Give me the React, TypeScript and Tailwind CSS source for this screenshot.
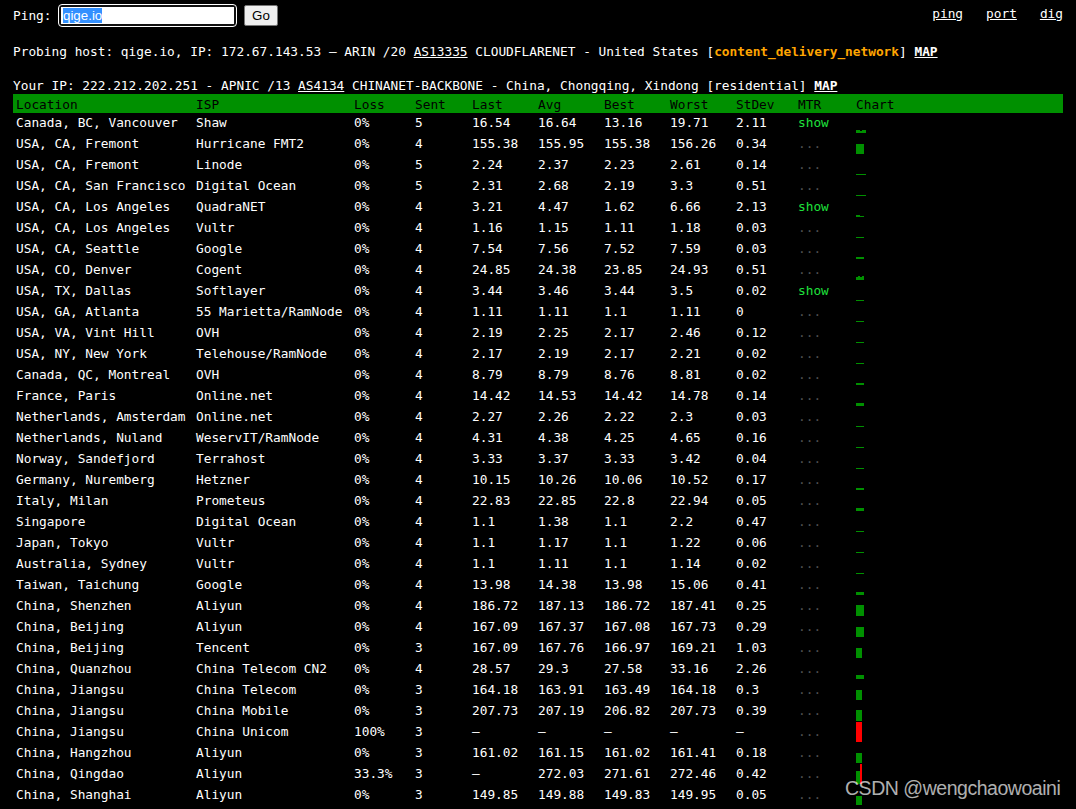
const GREEN = '#009000';
const RED = '#ff0000';

type Row = [string, string, string, number, string, string, string, string, string, boolean, number[]];

// Chart values are bar heights in pixels; -1 marks a lost packet.
const rows: Row[] = [
  ['Canada, BC, Vancouver', 'Shaw', '0%', 5, '16.54', '16.64', '13.16', '19.71', '2.11', true, [3, 3, 2, 3, 3]],
  ['USA, CA, Fremont', 'Hurricane FMT2', '0%', 4, '155.38', '155.95', '155.38', '156.26', '0.34', false, [10, 10, 10, 10]],
  ['USA, CA, Fremont', 'Linode', '0%', 5, '2.24', '2.37', '2.23', '2.61', '0.14', false, [1, 1, 1, 1, 1]],
  ['USA, CA, San Francisco', 'Digital Ocean', '0%', 5, '2.31', '2.68', '2.19', '3.3', '0.51', false, [1, 1, 1, 1, 1]],
  ['USA, CA, Los Angeles', 'QuadraNET', '0%', 4, '3.21', '4.47', '1.62', '6.66', '2.13', true, [2, 2, 1, 1]],
  ['USA, CA, Los Angeles', 'Vultr', '0%', 4, '1.16', '1.15', '1.11', '1.18', '0.03', false, [1, 1, 1, 1]],
  ['USA, CA, Seattle', 'Google', '0%', 4, '7.54', '7.56', '7.52', '7.59', '0.03', false, [2, 2, 2, 2]],
  ['USA, CO, Denver', 'Cogent', '0%', 4, '24.85', '24.38', '23.85', '24.93', '0.51', false, [3, 4, 3, 4]],
  ['USA, TX, Dallas', 'Softlayer', '0%', 4, '3.44', '3.46', '3.44', '3.5', '0.02', true, [1, 1, 1, 1]],
  ['USA, GA, Atlanta', '55 Marietta/RamNode', '0%', 4, '1.11', '1.11', '1.1', '1.11', '0', false, [1, 1, 1, 1]],
  ['USA, VA, Vint Hill', 'OVH', '0%', 4, '2.19', '2.25', '2.17', '2.46', '0.12', false, [1, 1, 1, 1]],
  ['USA, NY, New York', 'Telehouse/RamNode', '0%', 4, '2.17', '2.19', '2.17', '2.21', '0.02', false, [1, 1, 1, 1]],
  ['Canada, QC, Montreal', 'OVH', '0%', 4, '8.79', '8.79', '8.76', '8.81', '0.02', false, [2, 2, 2, 2]],
  ['France, Paris', 'Online.net', '0%', 4, '14.42', '14.53', '14.42', '14.78', '0.14', false, [3, 3, 3, 3]],
  ['Netherlands, Amsterdam', 'Online.net', '0%', 4, '2.27', '2.26', '2.22', '2.3', '0.03', false, [1, 1, 1, 1]],
  ['Netherlands, Nuland', 'WeservIT/RamNode', '0%', 4, '4.31', '4.38', '4.25', '4.65', '0.16', false, [1, 1, 1, 1]],
  ['Norway, Sandefjord', 'Terrahost', '0%', 4, '3.33', '3.37', '3.33', '3.42', '0.04', false, [1, 1, 1, 1]],
  ['Germany, Nuremberg', 'Hetzner', '0%', 4, '10.15', '10.26', '10.06', '10.52', '0.17', false, [2, 2, 2, 2]],
  ['Italy, Milan', 'Prometeus', '0%', 4, '22.83', '22.85', '22.8', '22.94', '0.05', false, [3, 3, 3, 3]],
  ['Singapore', 'Digital Ocean', '0%', 4, '1.1', '1.38', '1.1', '2.2', '0.47', false, [1, 1, 1, 1]],
  ['Japan, Tokyo', 'Vultr', '0%', 4, '1.1', '1.17', '1.1', '1.22', '0.06', false, [1, 1, 1, 1]],
  ['Australia, Sydney', 'Vultr', '0%', 4, '1.1', '1.11', '1.1', '1.14', '0.02', false, [1, 1, 1, 1]],
  ['Taiwan, Taichung', 'Google', '0%', 4, '13.98', '14.38', '13.98', '15.06', '0.41', false, [3, 3, 3, 3]],
  ['China, Shenzhen', 'Aliyun', '0%', 4, '186.72', '187.13', '186.72', '187.41', '0.25', false, [11, 11, 11, 11]],
  ['China, Beijing', 'Aliyun', '0%', 4, '167.09', '167.37', '167.08', '167.73', '0.29', false, [10, 10, 10, 10]],
  ['China, Beijing', 'Tencent', '0%', 3, '167.09', '167.76', '166.97', '169.21', '1.03', false, [10, 10, 10]],
  ['China, Quanzhou', 'China Telecom CN2', '0%', 4, '28.57', '29.3', '27.58', '33.16', '2.26', false, [4, 4, 4, 4]],
  ['China, Jiangsu', 'China Telecom', '0%', 3, '164.18', '163.91', '163.49', '164.18', '0.3', false, [10, 10, 10]],
  ['China, Jiangsu', 'China Mobile', '0%', 3, '207.73', '207.19', '206.82', '207.73', '0.39', false, [11, 11, 11]],
  ['China, Jiangsu', 'China Unicom', '100%', 3, '–', '–', '–', '–', '–', false, [-1, -1, -1]],
  ['China, Hangzhou', 'Aliyun', '0%', 3, '161.02', '161.15', '161.02', '161.41', '0.18', false, [10, 10, 10]],
  ['China, Qingdao', 'Aliyun', '33.3%', 3, '–', '272.03', '271.61', '272.46', '0.42', false, [13, 13, -1]],
  ['China, Shanghai', 'Aliyun', '0%', 3, '149.85', '149.88', '149.83', '149.95', '0.05', false, [9, 9, 9]],
];

const headings = ['Location', 'ISP', 'Loss', 'Sent', 'Last', 'Avg', 'Best', 'Worst', 'StDev', 'MTR', 'Chart'];

const columns = 'grid grid-cols-[180px_158px_61px_57px_66px_66px_66px_66px_62px_58px_1fr]';

function Chart({ values }: { values: number[] }) {
  return (
    <svg width="200" height="20" className="block" shapeRendering="crispEdges">
      {values.map((v, i) => {
        const h = v < 0 ? 20 : v;
        return <rect key={i} x={i * 2} y={20 - h} width="2" height={h} fill={v < 0 ? RED : GREEN} />;
      })}
    </svg>
  );
}

export default function App() {
  return (
    <div className="relative h-[809px] w-full overflow-hidden bg-black pl-[13px] pr-[13px] font-['DejaVu_Sans_Mono',monospace] text-[12.8px] leading-[17px] whitespace-pre text-white">
      <header className="flex h-[43px] justify-between">
        <form className="flex h-[31px] items-center" onSubmit={(e) => e.preventDefault()}>
          <label className="w-[45px]">Ping:</label>
          <div className="h-[23px] w-[179px] rounded-[4px] border-[1.5px] border-white bg-[#101010] p-[2px]">
            <div className="flex h-full items-center bg-white pl-[2px] font-['Liberation_Sans',sans-serif] text-[13.33px] leading-[15px] text-white">
              <span className="bg-[#3390ff]">qige.io</span>
            </div>
          </div>
          <button className="ml-[7px] h-[21px] w-[34px] rounded-[2px] border border-[#767676] bg-[#efefef] font-['Liberation_Sans',sans-serif] text-[13.33px] leading-[15px] text-black">
            Go
          </button>
        </form>
        <nav className="flex gap-[23px] pt-[5px]">
          <a className="underline">ping</a>
          <a className="underline">port</a>
          <a className="underline">dig</a>
        </nav>
      </header>
      <p className="h-[34px]">
        Probing host: qige.io, IP: 172.67.143.53 – ARIN /20 <a className="underline">AS13335</a> CLOUDFLARENET - United States [<b className="text-[#ffa500]">content_delivery_network</b>] <a className="font-bold underline">MAP</a>
      </p>
      <p className="h-[17px]">
        Your IP: 222.212.202.251 - APNIC /13 <a className="underline">AS4134</a> CHINANET-BACKBONE - China, Chongqing, Xindong [residential] <a className="font-bold underline">MAP</a>
      </p>
      <div className={`${columns} h-[19px] bg-[#009000] leading-[21px] text-black`}>
        {headings.map((h) => (
          <div key={h} className="pl-[3px]">{h}</div>
        ))}
      </div>
      {rows.map(([location, isp, loss, sent, last, avg, best, worst, dev, mtr, chart], i) => (
        <div key={i} className={`${columns} h-[21px] leading-[19px]`}>
          {[location, isp, loss, sent, last, avg, best, worst, dev].map((cell, c) => (
            <div key={c} className="pl-[3px]">{cell}</div>
          ))}
          <div className="pl-[3px]">
            {mtr ? <span className="text-[#1fe03c]">show</span> : <span className="text-[#505050]">...</span>}
          </div>
          <div className="pl-[3px]">
            <Chart values={chart} />
          </div>
        </div>
      ))}
      <div className="absolute top-[776px] left-[845px] font-['Liberation_Sans',sans-serif] text-[19.5px] leading-[24px] tracking-[-0.47px] text-white/70">
        CSDN @wengchaowoaini
      </div>
    </div>
  );
}
